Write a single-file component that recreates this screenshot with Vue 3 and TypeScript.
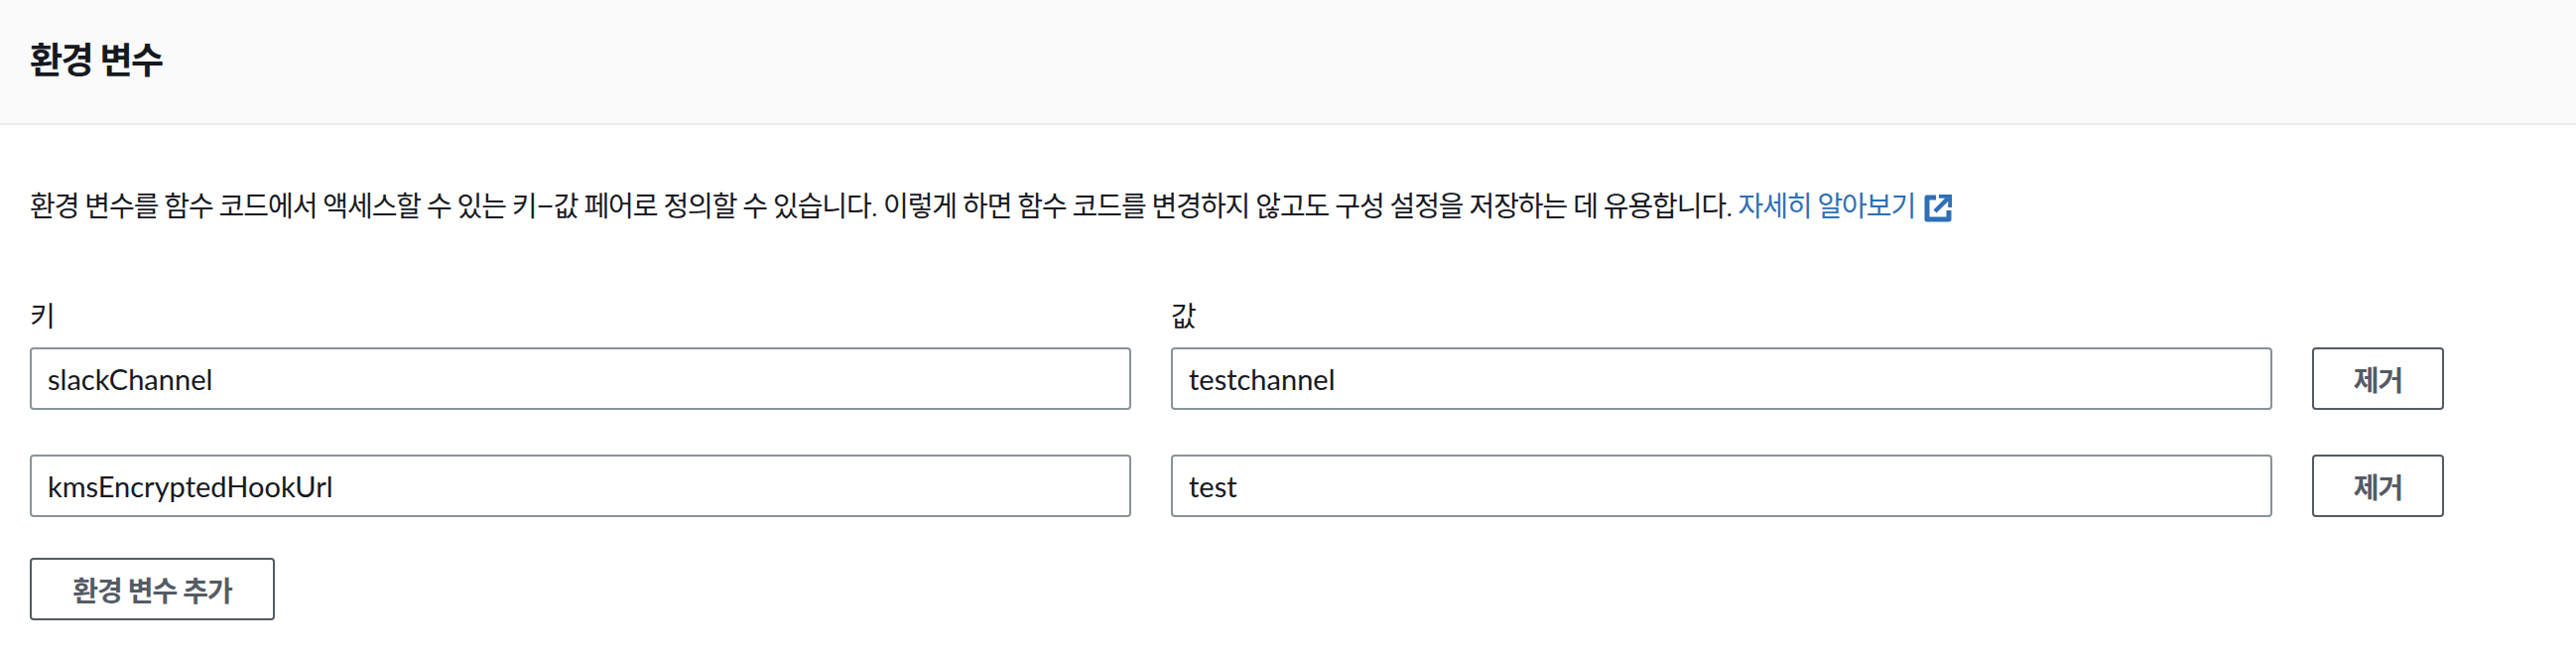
<script setup lang="ts">
interface EnvRow {
  key: string
  value: string
}

const rows: EnvRow[] = [
  { key: 'slackChannel', value: 'testchannel' },
  { key: 'kmsEncryptedHookUrl', value: 'test' },
]
</script>

<template>
  <div class="panel">
    <header class="panel-header">
      <h2>환경 변수</h2>
    </header>
    <div class="panel-body">
      <p class="desc">
        환경 변수를 함수 코드에서 액세스할 수 있는 키–값 페어로 정의할 수 있습니다. 이렇게 하면 함수 코드를 변경하지 않고도 구성 설정을 저장하는 데 유용합니다.
        <a class="link" href="#">자세히 알아보기<svg class="ext" viewBox="0 0 28 28" width="28" height="28" fill="none">
            <path d="M12 3H3v22h22v-9" stroke="#2f6fb5" stroke-width="5" stroke-linejoin="round" />
            <path d="M11 17L24 4" stroke="#2f6fb5" stroke-width="4.5" />
            <path d="M15 1.5h11.5V13" stroke="#2f6fb5" stroke-width="4.5" />
          </svg></a>
      </p>
      <div class="labels">
        <span>키</span>
        <span>값</span>
      </div>
      <div v-for="row in rows" :key="row.key" class="row">
        <input class="field" :value="row.key" readonly />
        <input class="field" :value="row.value" readonly />
        <button class="btn remove" type="button">제거</button>
      </div>
      <button class="btn add" type="button">환경 변수 추가</button>
    </div>
  </div>
</template>

<style scoped>
.panel {
  width: 2596px;
  height: 666px;
  background: #fff;
  color: #16191f;
  font-family: Roboto, "Noto Sans CJK KR", sans-serif;
  font-size: 28px;
  overflow: hidden;
}

.panel-header {
  height: 124px;
  background: #fafafa;
  border-bottom: 2px solid #eaeded;
  display: flex;
  align-items: center;
  padding: 0 30px;
}

.panel-header h2 {
  margin: 0;
  font-size: 36px;
  font-weight: 700;
  line-height: 44px;
  letter-spacing: -1.6px;
}

.panel-body {
  padding: 0 30px;
}

.desc {
  margin: 0;
  padding-top: 62px;
  line-height: 42px;
  font-size: 28px;
  letter-spacing: -1.06px;
  white-space: nowrap;
}

.link {
  color: #2f6fb5;
  text-decoration: none;
}

.ext {
  margin-left: 9px;
  vertical-align: -6px;
}

.labels {
  display: grid;
  grid-template-columns: 1110px 1110px;
  column-gap: 40px;
  margin-top: 70px;
  height: 40px;
  line-height: 40px;
  font-size: 28px;
  letter-spacing: -1px;
}

.row {
  display: grid;
  grid-template-columns: 1110px 1110px 133px;
  column-gap: 40px;
  margin-top: 10px;
  margin-bottom: 45px;
}

.row + .row {
  margin-top: 0;
  margin-bottom: 41px;
}

.field {
  box-sizing: border-box;
  height: 63px;
  width: 100%;
  padding: 0 16px;
  border: 2px solid #879596;
  border-radius: 4px;
  font-family: Lato, "Noto Sans CJK KR", sans-serif;
  font-size: 29px;
  color: #16191f;
  background: #fff;
  outline: none;
}

.btn {
  box-sizing: border-box;
  height: 63px;
  border: 2px solid #545b64;
  border-radius: 4px;
  background: #fff;
  color: #545b64;
  font-family: inherit;
  font-size: 28px;
  font-weight: 700;
  letter-spacing: -1px;
  padding: 0;
}

.add {
  width: 247px;
}
</style>
